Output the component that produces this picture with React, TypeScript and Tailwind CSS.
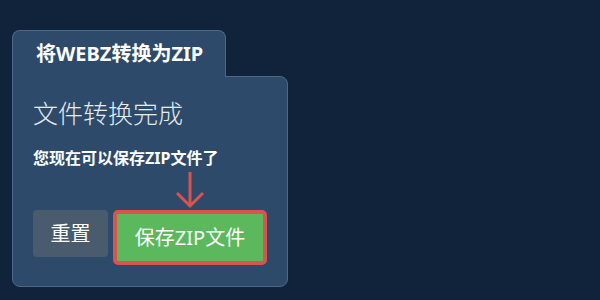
import React from "react";

export default function App() {
  return (
    <div
      className="w-[600px] h-[300px] bg-[#11233a] pt-[30px] pl-[12px]"
      style={{ fontFamily: '"Noto Sans", "Noto Sans CJK SC", sans-serif' }}
    >
      <div className="w-[276px] flex flex-col">
        <div className="relative z-10 -mb-px self-start w-[214px] h-[47px] bg-[#2d4a6a] border border-b-0 border-[#4d6888] rounded-t-[8px] flex items-center pl-[23px]">
          <span className="text-[20px] font-bold text-white leading-none">将WEBZ转换为ZIP</span>
        </div>
        <div className="bg-[#2d4a6a] border border-[#4d6888] rounded-b-[8px] rounded-tr-[8px] h-[211px] px-[20px] pt-[18px]">
          <div className="text-[25px] font-light text-[#e6ebf0] leading-[36px]">文件转换完成</div>
          <div className="mt-[16px] text-[16px] font-bold text-white leading-[22px]">您现在可以保存ZIP文件了</div>
          <div className="mt-[41px] flex items-start gap-[5px]">
            <button className="h-[47px] w-[75px] rounded-[4px] bg-[#4a5b6e] text-[20px] text-white flex items-center justify-center">
              重置
            </button>
            <div className="relative">
              <svg
                className="absolute left-1/2 -translate-x-1/2 -top-[39px]"
                width="32"
                height="38"
                viewBox="0 0 32 38"
                fill="none"
                stroke="#d9534f"
                strokeWidth="3"
              >
                <path d="M16 1 V35" />
                <path d="M3 22 L16 35 L29 22" />
              </svg>
              <button className="h-[55px] w-[154px] rounded-[5px] border-[4px] border-[#d9534f] bg-[#5cb85c] text-[20px] text-white flex items-center justify-center">
                保存ZIP文件
              </button>
            </div>
          </div>
        </div>
      </div>
    </div>
  );
}
